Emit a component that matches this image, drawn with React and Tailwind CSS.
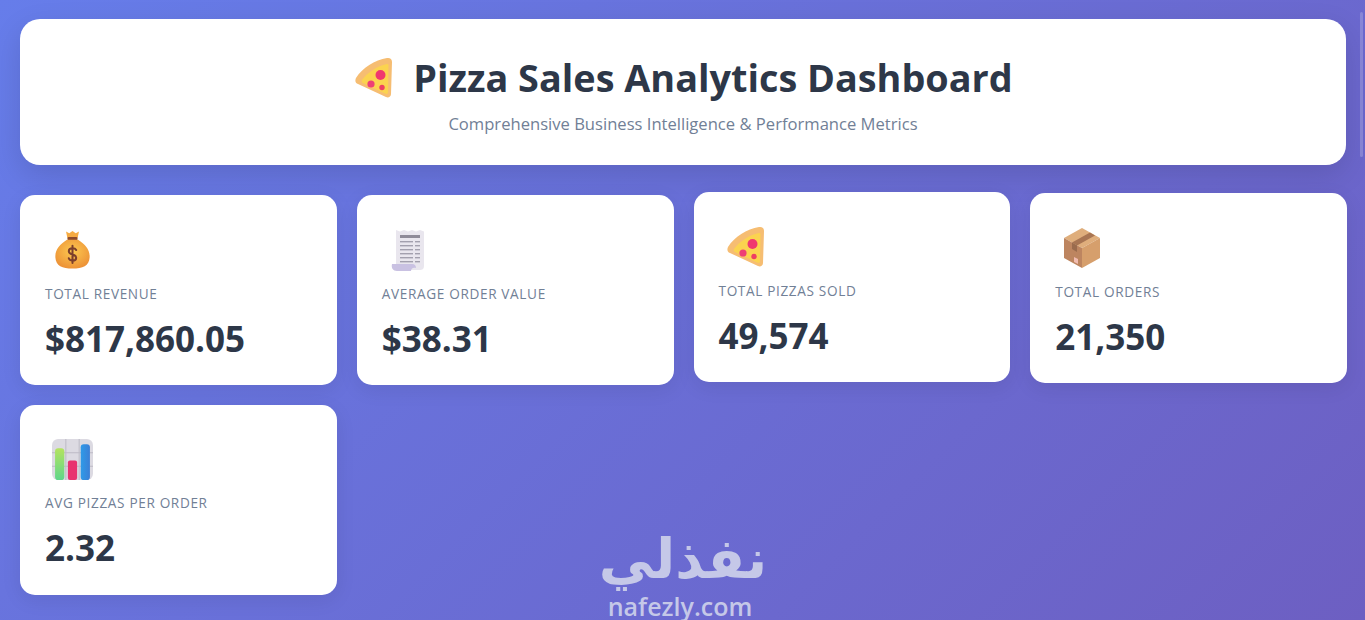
import React from 'react';

const Pizza = ({ className }) => (
  <svg viewBox="0 0 42 42" className={className}>
    <path d="M3 21 C9 11 22 3 34 1 C37 0.500 39 2 39 5 L38 37 C38 40 35 41 33 40 L5 27 C2 26 2 23 3 21Z" fill="#f6bd72" />
    <path d="M9 23 C14 16 24 9 34 7 C35 7 35.500 7.500 35.500 8.500 L35 35 C35 37 33.500 37.500 32 36.500 L10 26 C9 25.500 8.500 24 9 23Z" fill="#fbd34f" />
    <circle cx="27.500" cy="18" r="5" fill="#f0386f" />
    <circle cx="18" cy="27" r="3.600" fill="#ee3f75" />
    <circle cx="29" cy="30.500" r="2.700" fill="#ee3f62" />
  </svg>
);

const MoneyBag = ({ className }) => (
  <svg viewBox="0 0 40 42" className={className}>
    <defs>
      <radialGradient id="bag" cx="0.5" cy="0.4" r="0.7">
        <stop offset="0" stopColor="#fdc950" />
        <stop offset="1" stopColor="#ea8a33" />
      </radialGradient>
    </defs>
    <path d="M13 1 L16.500 3 L20 0.500 L23.500 3 L27 1 L25.500 8 H14.500Z" fill="#f6ab42" />
    <rect x="14.500" y="7" width="11" height="3.500" rx="1.500" fill="#8c4a2b" />
    <path d="M14 10 H26 C34 15 39 21 38.500 29 C38 38 31 41 20 41 C9 41 2 38 1.500 29 C1 21 6 15 14 10Z" fill="url(#bag)" />
    <path d="M24 21 C23.300 19.500 22 19 20 19 C17.500 19 16 20.300 16 22.300 C16 26.800 24 24.800 24 29.300 C24 31.300 22.500 32.500 20 32.500 C18 32.500 16.500 31.700 16 30 M20 16.500 V35" fill="none" stroke="#7c3f2c" strokeWidth="2.200" strokeLinecap="round" />
  </svg>
);

const Receipt = ({ className }) => (
  <svg viewBox="0 0 34 42" className={className}>
    <path d="M5 1 L9 2.500 L13 1 L17 2.500 L21 1 L25 2.500 L29 1 L33 2.500 V37 C33 40 31 41 29 41 H8 L5 36Z" fill="#e9e6ee" />
    <rect x="9" y="6" width="20" height="3" fill="#8f8b99" />
    {[12, 16, 20, 24, 28, 32].map((y) => (
      <g key={y} fill="#a3a0ae">
        <rect x="9" y={y} width="13" height="1.400" />
        <rect x="24" y={y} width="5" height="1.400" />
      </g>
    ))}
    <path d="M1 35 H21 C24 35 25 37 25 39 C22 38 20 39.500 20 42 H6 C2 42 0 39 1 35Z" fill="#c9c1e2" />
  </svg>
);

const Box = ({ className }) => (
  <svg viewBox="0 0 38 42" className={className}>
    <path d="M19 1 L37 11 L19 21 L1 11Z" fill="#dfae7c" />
    <path d="M1 11 L19 21 V41 L1 31Z" fill="#bd8560" />
    <path d="M37 11 L19 21 V41 L37 31Z" fill="#d69f6c" />
    <path d="M9 15.500 L27 5.500 L32 8.500 L14 18.500Z" fill="#a87553" />
    <path d="M9 15.500 L14 18.500 V25 L9 22Z" fill="#9a6b4d" />
    <path d="M11 30 L15 32 V37 L11 35Z" fill="#f1bcb0" />
  </svg>
);

const Bars = ({ className }) => (
  <svg viewBox="0 0 40 40" className={className}>
    <defs>
      <linearGradient id="barGreen" x1="0" y1="0" x2="0" y2="1">
        <stop offset="0" stopColor="#b4e35f" />
        <stop offset="1" stopColor="#5fd68a" />
      </linearGradient>
      <linearGradient id="barBlue" x1="0" y1="0" x2="1" y2="0">
        <stop offset="0" stopColor="#2f9be8" />
        <stop offset="1" stopColor="#3b7fd6" />
      </linearGradient>
    </defs>
    <rect width="40" height="40" rx="6" fill="#dcdae2" />
    <path d="M13.500 0 V40 M26.500 0 V40 M0 13.500 H40 M0 26.500 H40" stroke="#bdbbc6" strokeWidth="1" />
    <rect x="3" y="9" width="9" height="31" rx="3" fill="url(#barGreen)" />
    <rect x="15.500" y="21" width="9" height="19" rx="2" fill="#e8336f" />
    <rect x="28" y="5" width="9" height="35" rx="3" fill="url(#barBlue)" />
  </svg>
);

const stats = [
  { icon: MoneyBag, size: 'h-[42px] w-[37px] ml-[9px]', label: 'Total Revenue', value: '$817,860.05', lift: '' },
  { icon: Receipt, size: 'h-[42px] w-[34px] ml-[9px]', label: 'Average Order Value', value: '$38.31', lift: '' },
  { icon: Pizza, size: 'h-[42px] w-[42px] ml-[6px]', label: 'Total Pizzas Sold', value: '49,574', lift: '-translate-y-[3px]' },
  { icon: Box, size: 'h-[42px] w-[38px] ml-[8px]', label: 'Total Orders', value: '21,350', lift: '-translate-y-[2px]' },
  { icon: Bars, size: 'h-[41px] w-[41px] ml-[7px]', label: 'Avg Pizzas Per Order', value: '2.32', lift: '' },
];

export default function App() {
  return (
    <div className="relative h-[620px] w-[1365px] overflow-hidden bg-[linear-gradient(135deg,#667dea,#6d5fc2)] pt-[19px] pl-[20px] pr-[18px] font-['Open_Sans','Noto_Sans',sans-serif]">
      <header className="mr-[1px] flex h-[146px] flex-col items-center rounded-[20px] bg-white pt-[34px] shadow-[0_10px_30px_rgba(0,0,0,0.12)]">
        <h1 className="flex items-center gap-[18px] text-[37.8px] leading-[50px] font-bold text-[#2d3748]">
          <Pizza className="h-[42px] w-[42px]" />
          Pizza Sales Analytics Dashboard
        </h1>
        <p className="mt-[9px] text-[16.6px] leading-[24px] text-[#718096]">
          Comprehensive Business Intelligence &amp; Performance Metrics
        </p>
      </header>

      <div className="mt-[30px] grid grid-cols-4 gap-[20px]">
        {stats.map((s) => (
          <div key={s.label} className={`h-[190px] rounded-[15px] bg-white px-[25px] pt-[34px] shadow-[0_5px_20px_rgba(0,0,0,0.08)] ${s.lift}`}>
            <s.icon className={s.size} />
            <div className="mt-[13px] text-[13.6px] leading-[20px] font-medium tracking-[0.65px] text-[#718096] uppercase">
              {s.label}
            </div>
            <div className="mt-[13px] text-[35px] leading-[44px] font-bold text-[#2d3748]">{s.value}</div>
          </div>
        ))}
      </div>

      {/* watermark */}
      <div className="absolute top-[525px] left-[583px] flex w-[200px] flex-col items-center text-[#c5c8e8]">
        <div dir="rtl" lang="ar" className="font-['DejaVu_Sans',sans-serif] text-[55px] leading-[68px] font-bold">نفذلي</div>
        <div className="-mt-[2px] -ml-[6px] text-[25px] leading-[30px] font-semibold">nafezly.com</div>
      </div>

      {/* overlay scrollbar */}
      <div className="absolute top-[12px] right-[2px] h-[145px] w-[3px] rounded-full bg-white/20" />
    </div>
  );
}
